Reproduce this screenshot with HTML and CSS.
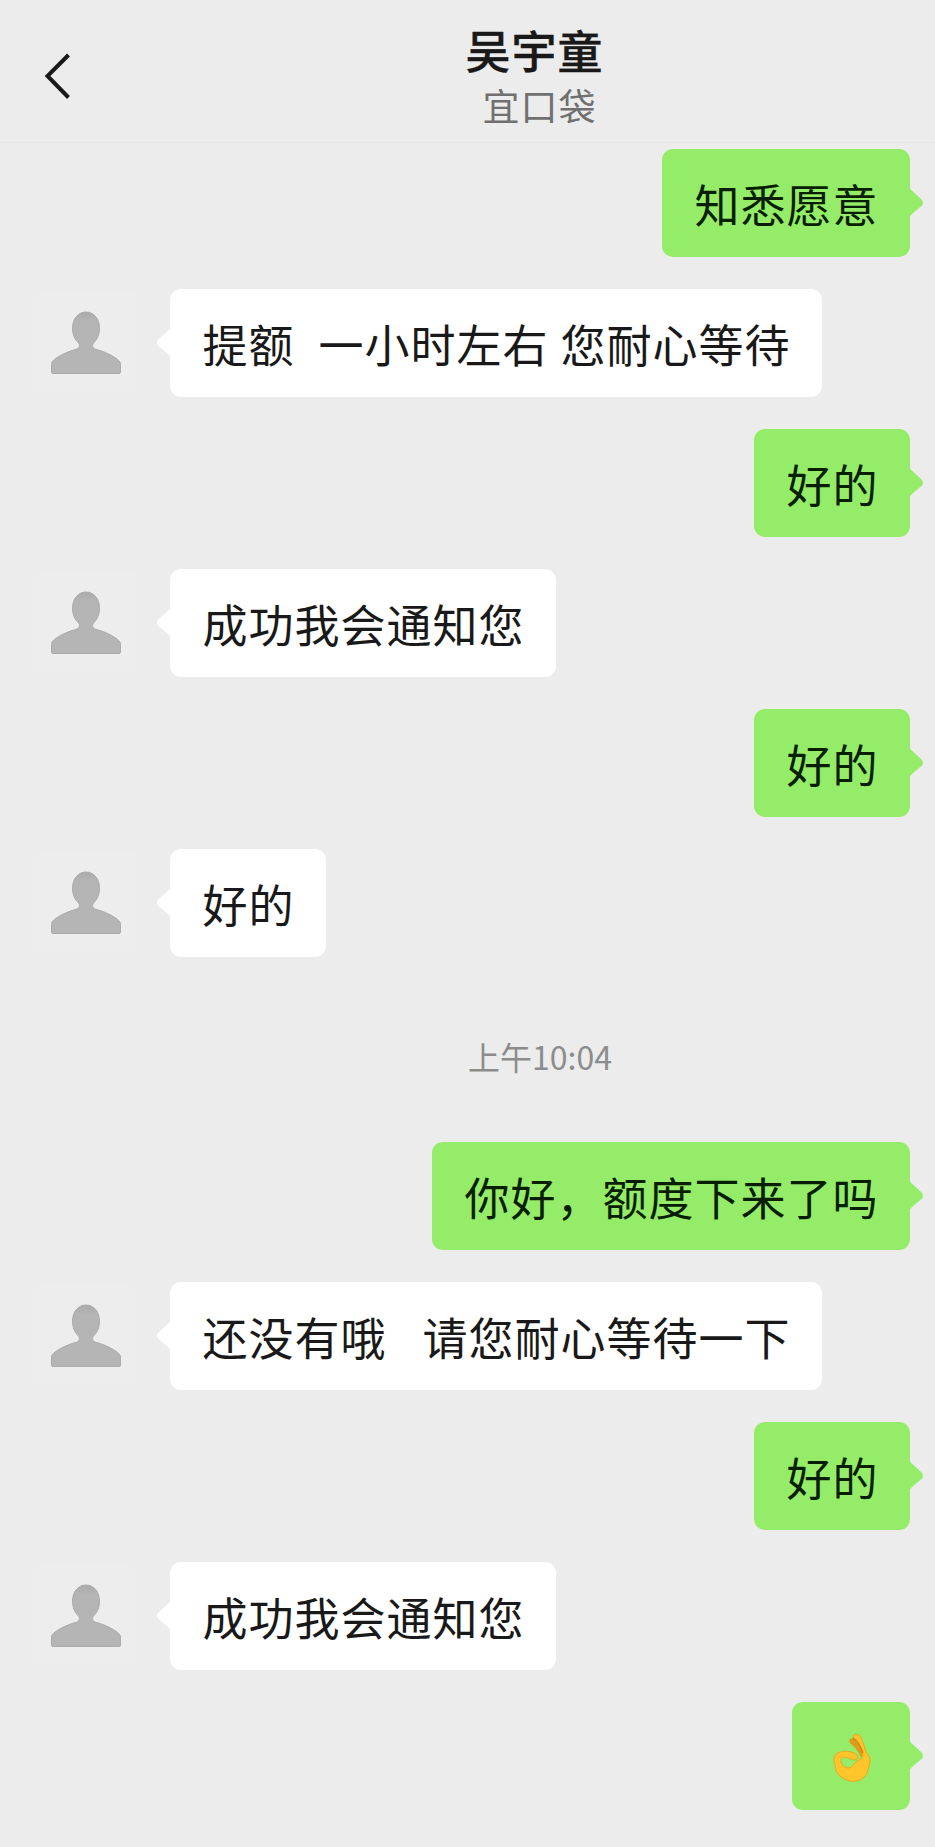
FILE: index.html
```html
<!DOCTYPE html>
<html lang="zh-CN">
  <head>
    <meta charset="UTF-8" />
    <meta name="viewport" content="width=device-width, initial-scale=1.0" />
    <title>吴宇童</title>
    <link rel="stylesheet" href="styles.css">
  </head>
  <body>
    <svg width="0" height="0" class="defs">
      <defs>
        <linearGradient id="shade" x1="0" y1="0" x2="0" y2="1">
          <stop offset="0" stop-color="#aaa" />
          <stop offset="0.15" stop-color="#b4b4b4" />
          <stop offset="1" stop-color="#b5b5b5" />
        </linearGradient>
      </defs>
      <symbol id="person" viewBox="0 0 98 98">
        <path
          fill="url(#shade)"
          stroke="#acacac"
          stroke-width="1"
          d="M50 19C42 19 36.500 26 36.500 35C36.500 42 39 46.500 42.500 50C44.200 52 43.500 55 41 56C30 59 20 64 16 69Q15.500 70 15.500 72V79Q15.500 80.500 17 80.500H83Q84.500 80.500 84.500 79V72Q84.500 70 84 69C80 64 70 59 59 56C56.500 55 55.800 52 57.500 50C61 46.500 63.500 42 63.500 35C63.500 26 58 19 50 19Z"
        />
      </symbol>
      <symbol id="tail" viewBox="0 0 15 32">
        <path d="M0 0L0.500 0.500Q1.500 2.500 4 4.500L13 13Q15 16 13 18.500L3 27Q0.500 29 0 32Z" />
      </symbol>
    </svg>

    <header class="header">
      <svg class="back" width="30" height="50" viewBox="0 0 30 50">
        <path d="M25.500 4L4.500 25L25.500 46.500" />
      </svg>
      <div class="heading">
        <h1>吴宇童</h1>
        <h2>宜口袋</h2>
      </div>
    </header>

    <main class="chat">
      <div class="message mine">
        <div class="bubble">知悉愿意<svg class="tail"><use href="#tail" /></svg></div>
      </div>
      <div class="message">
        <svg class="avatar"><use href="#person" /></svg>
        <div class="bubble">提额  一小时左右 您耐心等待<svg class="tail"><use href="#tail" /></svg></div>
      </div>
      <div class="message mine">
        <div class="bubble">好的<svg class="tail"><use href="#tail" /></svg></div>
      </div>
      <div class="message">
        <svg class="avatar"><use href="#person" /></svg>
        <div class="bubble">成功我会通知您<svg class="tail"><use href="#tail" /></svg></div>
      </div>
      <div class="message mine">
        <div class="bubble">好的<svg class="tail"><use href="#tail" /></svg></div>
      </div>
      <div class="message">
        <svg class="avatar"><use href="#person" /></svg>
        <div class="bubble">好的<svg class="tail"><use href="#tail" /></svg></div>
      </div>

      <p class="time">上午10:04</p>

      <div class="message mine">
        <div class="bubble">你好，额度下来了吗<svg class="tail"><use href="#tail" /></svg></div>
      </div>
      <div class="message">
        <svg class="avatar"><use href="#person" /></svg>
        <div class="bubble">还没有哦   请您耐心等待一下<svg class="tail"><use href="#tail" /></svg></div>
      </div>
      <div class="message mine">
        <div class="bubble">好的<svg class="tail"><use href="#tail" /></svg></div>
      </div>
      <div class="message">
        <svg class="avatar"><use href="#person" /></svg>
        <div class="bubble">成功我会通知您<svg class="tail"><use href="#tail" /></svg></div>
      </div>
      <div class="message mine">
        <div class="bubble"><svg class="emoji" viewBox="0 0 54 62" role="img" aria-label="OK">
            <path class="finger" d="M25 17C23 13 27 11 30 14L39 28L37 33C34 26 30 21 25 17Z" />
            <path class="hand" d="M28 11C28 8 33 7 35 10C38 15 39 20 41 26C43 29 45 31 45 35C44 41 43 45 41 49C37 54 31 56 25 55C16 53 10 47 10 38C8 35 9 29 13 27C18 24 28 25 32 29C34 32 32 34 29 34C25 33 18 29 16 33C15 36 18 42 23 42C28 42 29 36 34 34C39 32 38 26 36 22Q34 15 28 11Z" />
            <path class="crease" d="M28 12Q34 16 38 27" />
          </svg><svg class="tail"><use href="#tail" /></svg></div>
      </div>
    </main>
  </body>
</html>
```

FILE: styles.css
```css
* {
  box-sizing: border-box;
}

body {
  margin: 0;
  background-color: #ececec;
  color: #191919;
  font-family: "Noto Sans CJK SC", sans-serif;
}

.defs {
  display: block;
}

.header {
  display: flex;
  align-items: center;
  height: 143px;
  padding-left: 43px;
  border-bottom: 1px solid #e6e6e6;
}

.back {
  margin-top: 10px;
  fill: none;
  stroke: #191919;
  stroke-width: 4;
}

.heading {
  flex: 1;
  padding: 12px 0 0 61px;
  text-align: center;
}

h1,
h2 {
  margin: 0;
}

h1 {
  font-size: 45px;
  font-weight: 500;
  letter-spacing: 1px;
  line-height: 56px;
  -webkit-text-stroke: 0.4px #191919;
}

h2 {
  padding-left: 10px;
  color: #707070;
  font-size: 37px;
  font-weight: 400;
  letter-spacing: 1px;
  line-height: 55px;
}

.chat {
  display: flex;
  flex-direction: column;
  gap: 32px;
  padding: 6px 25px 37px 36px;
}

.message {
  display: flex;
  align-items: flex-start;
  gap: 36px;
}

.mine {
  justify-content: flex-end;
}

.avatar {
  width: 98px;
  height: 98px;
  margin-top: 4px;
  background-color: #ededed;
}

.bubble {
  position: relative;
  height: 108px;
  padding: 0 31.5px 0 32.5px;
  border-radius: 11px;
  background-color: #fff;
  font-size: 45px;
  letter-spacing: 1px;
  line-height: 110px;
  white-space: pre;
  word-spacing: 0.9px;
}

.mine .bubble {
  background-color: #95ec69;
  color: #071f00;
}

.tail {
  position: absolute;
  top: 38px;
  left: -14px;
  width: 15px;
  height: 32px;
  fill: #fff;
  transform: scaleX(-1);
}

.mine .tail {
  left: auto;
  right: -14px;
  fill: #95ec69;
  transform: none;
}

.time {
  height: 57px;
  margin: 32px 0;
  padding-left: 134px;
  color: #8c8c8c;
  font-size: 32px;
  line-height: 71px;
  text-align: center;
}

.emoji {
  display: block;
  width: 54px;
  height: 62px;
  margin-top: 24px;
}

.hand {
  fill: #ffc52b;
  stroke: #eca61d;
  stroke-width: 1;
}

.finger {
  fill: #e39a18;
}

.crease {
  fill: none;
  stroke: #d98213;
  stroke-width: 1.5;
}
```
